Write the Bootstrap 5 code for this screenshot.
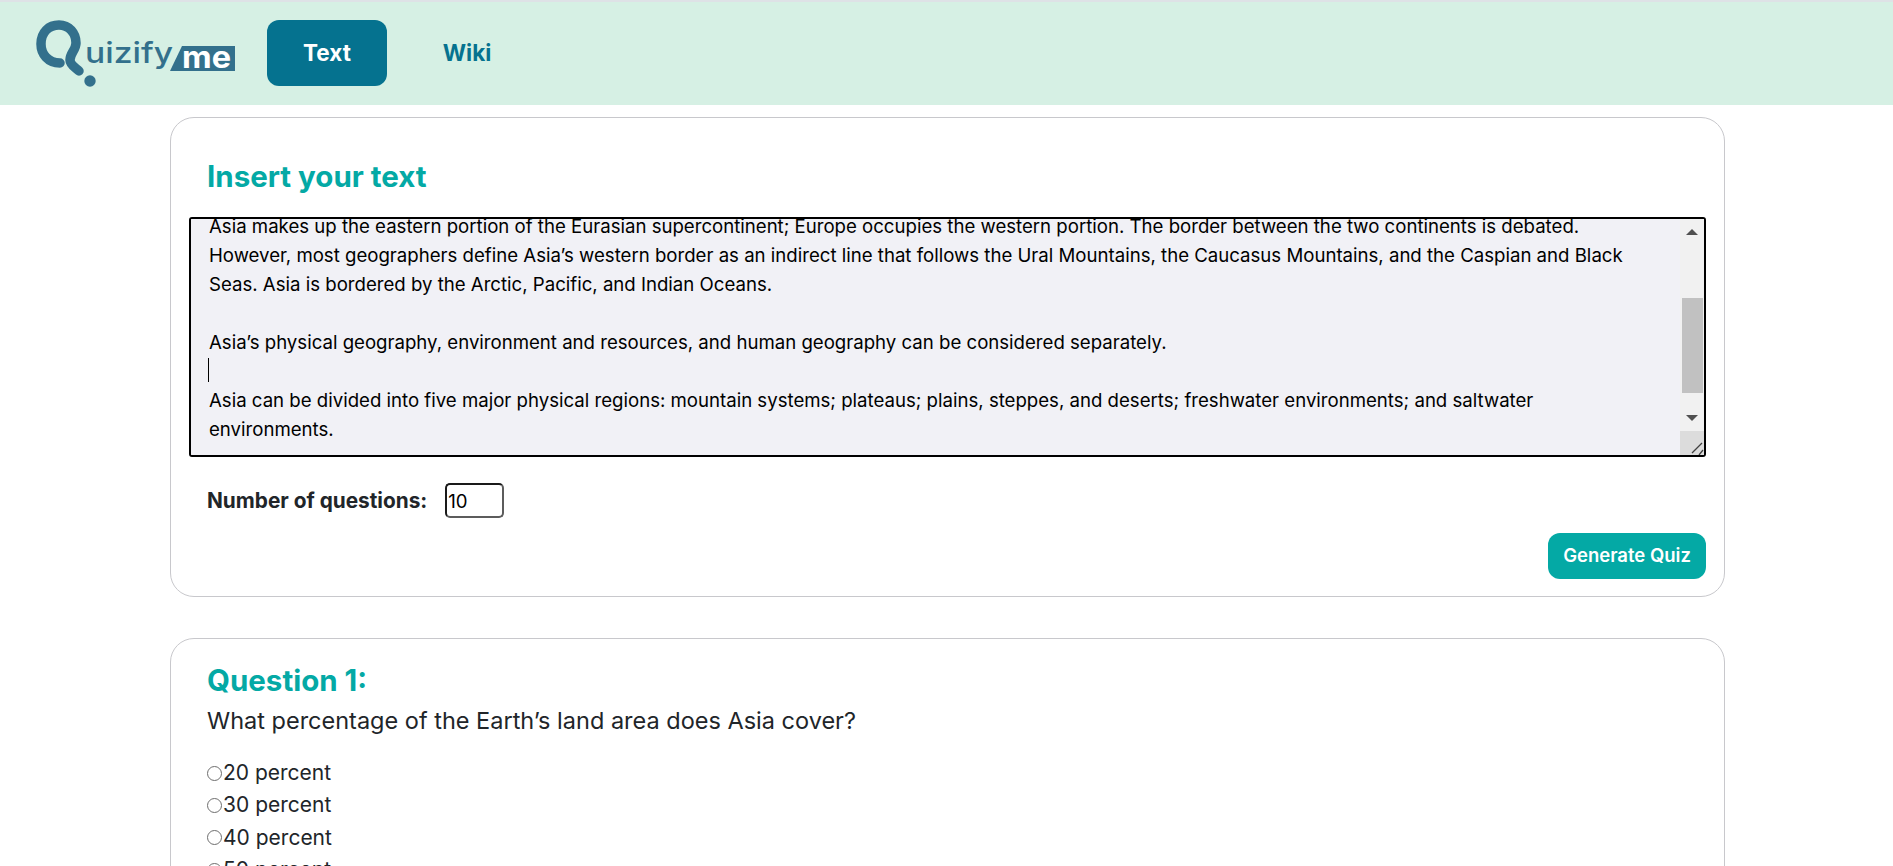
<!DOCTYPE html>
<html lang="en">
<head>
<meta charset="utf-8">
<title>Quizify me</title>
<link href="https://cdn.jsdelivr.net/npm/bootstrap@5.3.0/dist/css/bootstrap.min.css" rel="stylesheet">
<style>
html,body{height:100%;overflow:hidden}
body{font-family:"Inter","Liberation Sans",sans-serif;color:#212529;background:#fff}
.qz-nav{background:#d6f0e4;border-top:2px solid #dee2e6;height:105px;padding:0 0 0 35px;align-items:flex-start;flex-wrap:nowrap;justify-content:flex-start}
.qz-logo{display:block;width:202px;height:70px;margin-top:17px;margin-right:30px;padding:0}
.qz-logo text{font-family:"Inter","Liberation Sans",sans-serif}
.qz-tabs{margin-top:18px;gap:20px}
.qz-tabs .nav-link{width:120px;height:66px;border-radius:12px;color:#05728f;font-weight:700;font-size:22.5px;padding:0;display:flex;align-items:center;justify-content:center}
.qz-tabs .nav-link.active{background:#05728f;color:#fff}
.qz-wrap{width:1555px;margin:12px 0 0 170px}
.qz-card{border:1px solid #c8c8cc;border-radius:24px;padding:0 18px}
.qz-card-a{height:480px;margin-bottom:41px}
.qz-card-b{height:400px}
.qz-h{color:#04a9a5;font-weight:700;font-size:29.5px;line-height:34px;margin:0}
.qz-card-a .qz-h{padding:41px 0 0 18px;margin-bottom:24px}
.qz-box{height:240px}
.qz-area{display:block;width:100%;height:240px;border:2px solid #000;border-radius:3px;background:#f1f1f6;color:#000;font-family:inherit;font-size:18.62px;line-height:29px;padding:2px 59px 0 18px;outline:0;resize:none;overflow-y:scroll;white-space:pre-wrap}
.qz-bar{position:absolute;right:2px;top:2px;display:block}
.qz-caret{position:absolute;left:19px;top:141px;width:1px;height:24px;background:#000}
.qz-count{margin-top:26px;padding-left:18px}
.qz-count label{font-weight:700;font-size:20.8px;margin-right:18px}
.qz-num{width:59px;height:35px;border:2px solid #5c5c5c;border-color:#1a1a1a #5c5c5c #5c5c5c #1a1a1a;border-radius:5px;font-size:18.62px;padding:0 1px;font-family:inherit;color:#000;outline:0;background:#fff;-moz-appearance:textfield}
.qz-num::-webkit-inner-spin-button{display:none}
.qz-btn{background:#04a9a5;color:#fff;border:0;border-radius:12px;font-weight:600;font-size:18.5px;height:46px;width:158px;padding:0}
.qz-btn:hover{background:#04a9a5;color:#fff}
.qz-act{margin-top:15px}
.qz-card-b .qz-h{padding:24px 0 0 18px;margin-bottom:9px}
.qz-q{font-size:23.5px;line-height:30px;padding-left:18px;margin-bottom:21px;font-weight:400}
.qz-opt{font-size:21px;line-height:32.3px;display:flex;align-items:center;padding-left:18px;color:#212529}
.qz-opt input{appearance:none;width:15px;height:15px;border:1px solid #6e6e6e;border-radius:50%;margin:0 1px 0 0;background:#fff}
</style>
</head>
<body>
<nav class="navbar qz-nav">
  <a class="navbar-brand qz-logo" href="#" aria-label="Quizify me">
    <svg width="202" height="70" viewBox="0 0 202 70" role="img">
      <path d="M25 44C13 44 6 35 6 25 6 13 14 6 24 6 34 6 41 14 41 24 41 31 35 34 35 41 35 46 41 49 44 52" fill="none" stroke="#33708c" stroke-width="9.500" stroke-linecap="round"/>
      <circle cx="55" cy="62" r="5.700" fill="#33708c"/>
      <polygon points="147,27 200,27 200,52 135,52" fill="#33708c"/>
      <text x="50" y="44" font-size="29" font-weight="500" fill="#33708c" textLength="88" lengthAdjust="spacingAndGlyphs">uizify</text>
      <text x="147" y="49" font-size="30" font-weight="700" fill="#fff" textLength="49" lengthAdjust="spacingAndGlyphs">me</text>
    </svg>
  </a>
  <ul class="nav nav-pills qz-tabs">
    <li class="nav-item"><a class="nav-link active" href="#">Text</a></li>
    <li class="nav-item"><a class="nav-link" href="#">Wiki</a></li>
  </ul>
</nav>
<main class="qz-wrap">
  <section class="card qz-card qz-card-a">
    <h2 class="qz-h">Insert your text</h2>
    <div class="position-relative qz-box">
      <textarea class="qz-area" id="qzText" spellcheck="false">Asia is the largest of the world’s continents, covering approximately 30 percent of the Earth’s land area. It is also the world’s most populous continent, with roughly 60 percent of the total population.

Asia makes up the eastern portion of the Eurasian supercontinent; Europe occupies the western portion. The border between the two continents is debated. However, most geographers define Asia’s western border as an indirect line that follows the Ural Mountains, the Caucasus Mountains, and the Caspian and Black Seas. Asia is bordered by the Arctic, Pacific, and Indian Oceans.

Asia’s physical geography, environment and resources, and human geography can be considered separately.

Asia can be divided into five major physical regions: mountain systems; plateaus; plains, steppes, and deserts; freshwater environments; and saltwater environments.






</textarea>
      <svg class="qz-bar" width="24" height="236" viewBox="0 0 24 236" aria-hidden="true">
        <rect width="24" height="212" fill="#f1f1f1"/>
        <rect x="2" y="79" width="21" height="95" fill="#c1c1c1"/>
        <path d="M12 10l6 6H6z" fill="#505050"/>
        <path d="M6 196h12l-6 6z" fill="#505050"/>
        <rect y="212" width="24" height="24" fill="#dcdcdc"/>
        <path d="M12 234l10-10M19 236l4-5" stroke="#404040" stroke-width="1.300" fill="none"/>
      </svg>
      <span class="qz-caret"></span>
    </div>
    <div class="qz-count d-flex align-items-center">
      <label for="qzNum">Number of questions:</label>
      <input class="qz-num" id="qzNum" type="number" value="10">
    </div>
    <div class="qz-act d-flex justify-content-end">
      <button class="btn qz-btn" type="button">Generate Quiz</button>
    </div>
  </section>
  <section class="card qz-card qz-card-b">
    <h2 class="qz-h">Question 1:</h2>
    <p class="qz-q">What percentage of the Earth’s land area does Asia cover?</p>
    <label class="qz-opt"><input type="radio" name="q1">20 percent</label>
    <label class="qz-opt"><input type="radio" name="q1">30 percent</label>
    <label class="qz-opt"><input type="radio" name="q1">40 percent</label>
    <label class="qz-opt"><input type="radio" name="q1">50 percent</label>
  </section>
</main>
<script src="https://cdn.jsdelivr.net/npm/bootstrap@5.3.0/dist/js/bootstrap.bundle.min.js"></script>
<script>document.getElementById('qzText').scrollTop=96;</script>
</body>
</html>
